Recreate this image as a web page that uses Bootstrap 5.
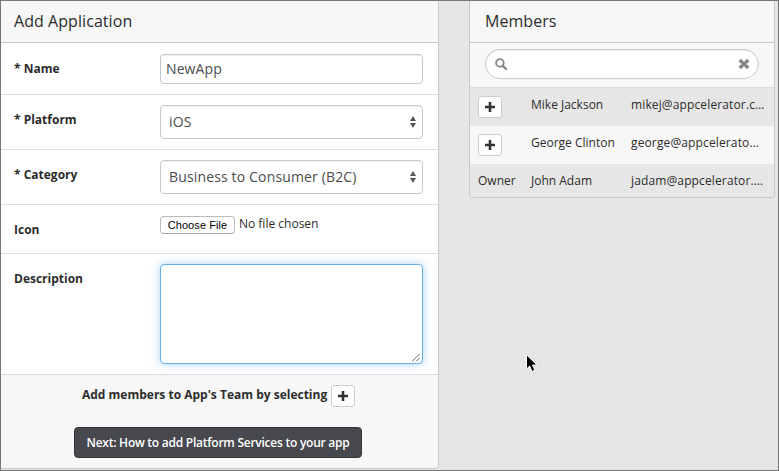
<!DOCTYPE html>
<html lang="en">
<head>
<meta charset="utf-8">
<meta name="viewport" content="width=device-width, initial-scale=1">
<title>Add Application</title>
<link href="https://cdn.jsdelivr.net/npm/bootstrap@5.3.0/dist/css/bootstrap.min.css" rel="stylesheet">
<style>
body{font-family:"Open Sans",sans-serif;font-size:12px;line-height:20px;color:#2c2c2c;background:#e6e6e6}
.frame{height:471px;border:1px solid #777;overflow:hidden;padding-right:4px}
.panel{background:#f7f7f7;border:1px solid #c9c9c9;border-top:0;border-radius:0 0 4px 4px}
.panel-app{width:438px;height:468px;border-left:0;border-bottom-left-radius:0}
.panel-members{width:306px;height:197px;margin-left:30px}
.panel-title{height:42px;font-size:16px;line-height:40px;font-weight:400;border-bottom:1px solid #c9c9c9;color:#2c2c2c;letter-spacing:.06px}
.panel-app .panel-title{padding-left:13px}
.panel-members .panel-title{padding-left:15px}
.field{background:#fff;border-bottom:1px solid #ddd;padding:11px 15px 0 13px}
.field label{width:146px;font-weight:700;padding-top:5px}
.h-name{height:52px}.h-select{height:55px}.h-icon{height:49px;padding-top:10px}.h-desc{height:121px;padding-top:10px}
.h-select{padding-top:10px}
.field .form-control,.field .form-select{width:263px;border:1px solid #c8c8c8;border-radius:4px;color:#4c4c4c;font-size:14px;background-color:#fff}
.field .form-control{height:30px;padding:3px 5px 5px;line-height:20px;letter-spacing:.1px;box-shadow:inset 0 1px 1px rgba(0,0,0,.075)}
.field .form-select{height:34px;padding:0 8px;line-height:32px;letter-spacing:.15px;background-image:none;box-shadow:inset 0 1px 1px rgba(0,0,0,.05)}
.arrows{right:6px;top:11px}
.field textarea.form-control{height:100px;border-color:#66afe9;box-shadow:0 0 8px rgba(82,168,236,.5);resize:none}
.grip{right:3px;bottom:2px}
.file-btn{width:75px;height:18px;font:11px/17px "Liberation Sans",Arial,sans-serif;letter-spacing:.08px;color:#000;border:1px solid #bbb;border-bottom-color:#a5a5a5;border-radius:4px;background:#fff;padding:0;margin-top:1px}
.file-name{font-size:12px;margin-left:4px;line-height:18px}
.app-foot{padding-top:10px}
.add-line{padding-left:81px}
.add-text{width:249px}
.plus{width:24px;height:22px;padding:0;border:1px solid #ccc;border-radius:3px;background:#fff;line-height:1}
.plus svg{display:block;margin:auto}
.next{width:288px;height:31px;padding:0;font-size:12px;font-weight:600;letter-spacing:-.25px;line-height:29px;color:#fff;background:#48484f;border:1px solid #36363c;border-radius:4px;margin:20px 0 0 73px}
.next:hover{background:#3c3c42;color:#fff}
.search-wrap{height:45px;padding:6px 15px 0;border-bottom:1px solid #ddd}
.search{height:30px;border:1px solid #c8c8c8;border-radius:15px;background:#fff;padding:0 8px 0 9px;box-shadow:inset 0 1px 1px rgba(0,0,0,.06)}
.search input{outline:0;min-width:0}
.member{height:38px;padding-left:8px}
.member.shade{background:#e6e6e6}
.m-act{width:53px}.m-name{width:100px}
.member .plus{margin-top:8px}
.m-txt{padding-top:7px}
.m-mail{letter-spacing:.13px}
.cursor{left:525px;top:353px}
</style>
</head>
<body>
<div class="frame d-flex align-items-start position-relative">
  <main class="panel panel-app flex-shrink-0">
    <h1 class="panel-title mb-0">Add Application</h1>
    <form class="mb-0">
      <div class="field h-name d-flex align-items-start">
        <label for="name">* Name</label>
        <input id="name" class="form-control" value="NewApp">
      </div>
      <div class="field h-select d-flex align-items-start">
        <label for="platform">* Platform</label>
        <div class="position-relative">
          <select id="platform" class="form-select"><option>iOS</option></select>
          <svg class="arrows position-absolute pe-none" width="8" height="12" fill="#555"><path d="M1 5 4 0 7 5ZM1 7 4 12 7 7Z"/></svg>
        </div>
      </div>
      <div class="field h-select d-flex align-items-start">
        <label for="category">* Category</label>
        <div class="position-relative">
          <select id="category" class="form-select"><option>Business to Consumer (B2C)</option></select>
          <svg class="arrows position-absolute pe-none" width="8" height="12" fill="#555"><path d="M1 5 4 0 7 5ZM1 7 4 12 7 7Z"/></svg>
        </div>
      </div>
      <div class="field h-icon d-flex align-items-start">
        <label>Icon</label>
        <button type="button" class="file-btn">Choose File</button>
        <span class="file-name">No file chosen</span>
      </div>
      <div class="field h-desc d-flex align-items-start">
        <label for="desc">Description</label>
        <div class="position-relative">
          <textarea id="desc" class="form-control"></textarea>
          <svg class="grip position-absolute" width="8" height="8" stroke="#666" fill="none"><path d="M0 7.5 7.5 0M4 7.5 7.5 4"/></svg>
        </div>
      </div>
      <div class="app-foot">
        <div class="add-line d-flex align-items-start">
          <b class="add-text text-nowrap">Add members to App's Team by selecting</b>
          <button type="button" class="plus" aria-label="Add"><svg width="10" height="10" fill="#333"><path d="M3.7 0h2.6v3.7H10v2.6H6.3V10H3.7V6.3H0V3.7h3.7z"/></svg></button>
        </div>
        <button type="button" class="btn next">Next: How to add Platform Services to your app</button>
      </div>
    </form>
  </main>
  <aside class="panel panel-members flex-shrink-0 overflow-hidden">
    <h2 class="panel-title mb-0">Members</h2>
    <div class="search-wrap">
      <div class="search d-flex align-items-center">
        <svg width="12" height="12" fill="none" stroke="#888"><circle cx="4.9" cy="4.9" r="3.8" stroke-width="1.9"/><path d="M7.8 7.8 11 11" stroke-width="2.4" stroke-linecap="round"/></svg>
        <input class="flex-grow-1 border-0 bg-transparent" aria-label="Search members">
        <svg width="12" height="10" fill="none" stroke="#888" stroke-width="3.4"><path d="M1.7 1 10.3 9M10.3 1 1.7 9"/></svg>
      </div>
    </div>
    <div class="member shade d-flex">
      <div class="m-act"><button type="button" class="plus" aria-label="Add"><svg width="10" height="10" fill="#333"><path d="M3.7 0h2.6v3.7H10v2.6H6.3V10H3.7V6.3H0V3.7h3.7z"/></svg></button></div>
      <div class="m-name m-txt">Mike Jackson</div><div class="m-txt m-mail">mikej@appcelerator.c…</div>
    </div>
    <div class="member d-flex">
      <div class="m-act"><button type="button" class="plus" aria-label="Add"><svg width="10" height="10" fill="#333"><path d="M3.7 0h2.6v3.7H10v2.6H6.3V10H3.7V6.3H0V3.7h3.7z"/></svg></button></div>
      <div class="m-name m-txt">George Clinton</div><div class="m-txt m-mail">george@appcelerato…</div>
    </div>
    <div class="member shade d-flex">
      <div class="m-act m-txt">Owner</div>
      <div class="m-name m-txt">John Adam</div><div class="m-txt m-mail">jadam@appcelerator.…</div>
    </div>
  </aside>
  <svg class="cursor position-absolute" width="12" height="19" viewBox="0 0 12 19"><path d="M.5.8V15L3.7 12 6 17.5 8.8 16.3 6.5 11H11Z" fill="#000" stroke="#fff"/></svg>
</div>
<script src="https://cdn.jsdelivr.net/npm/bootstrap@5.3.0/dist/js/bootstrap.bundle.min.js"></script>
</body>
</html>
